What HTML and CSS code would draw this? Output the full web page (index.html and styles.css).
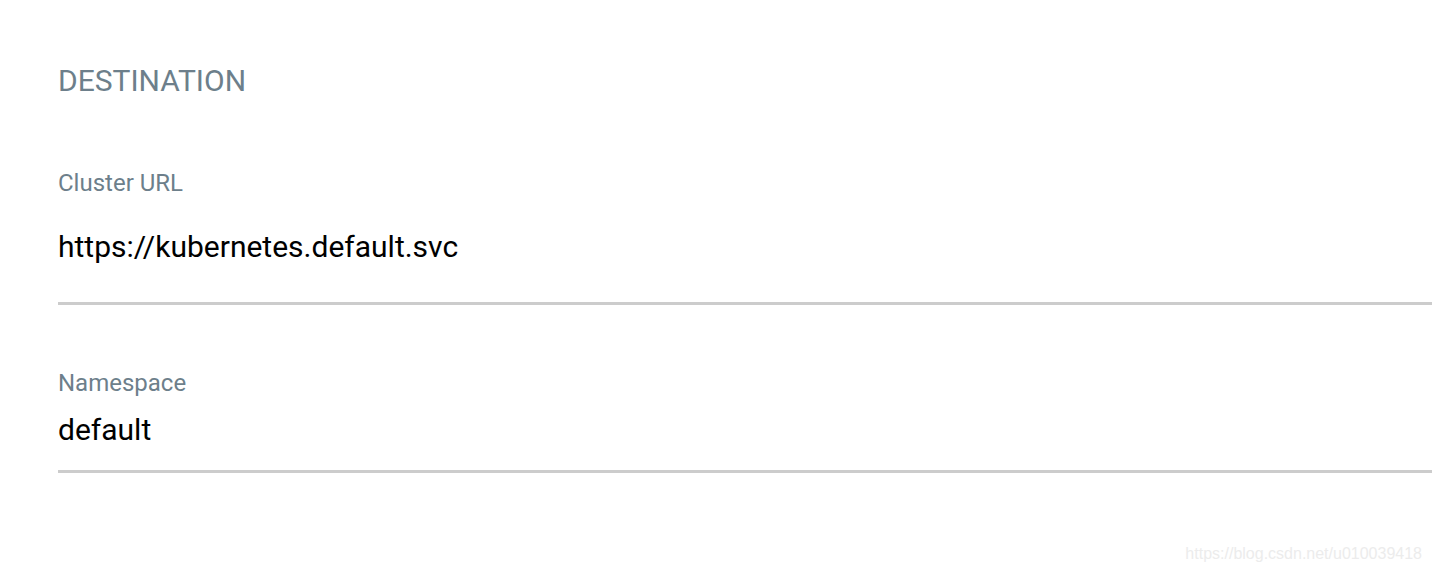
FILE: index.html
```html
<!DOCTYPE html>
<html>
<head>
<meta charset="utf-8">
<link rel="stylesheet" href="styles.css">
</head>
<body>
<div class="page">
  <h2 class="section-title">DESTINATION</h2>
  <div class="field field-url">
    <label class="field-label">Cluster URL</label>
    <div class="field-value">https://kubernetes.default.svc</div>
  </div>
  <div class="field field-ns">
    <label class="field-label">Namespace</label>
    <div class="field-value">default</div>
  </div>
  <div class="watermark">https://blog.csdn.net/u010039418</div>
</div>
</body>
</html>
```
FILE: styles.css
```css
html, body {
  margin: 0;
  padding: 0;
  background: #fff;
}
body {
  width: 1432px;
  height: 572px;
  overflow: hidden;
  font-family: Roboto, "Liberation Sans", sans-serif;
}
.page {
  position: relative;
  height: 572px;
  padding: 63px 0 0 58px;
  box-sizing: border-box;
}
.section-title {
  margin: 0;
  font-size: 30px;
  font-weight: 400;
  line-height: 36px;
  color: #6d7f8b;
}
.field {
  border-bottom: 3px solid #cccccc;
}
.field-url {
  margin-top: 70px;
  padding-bottom: 38px;
}
.field-ns {
  margin-top: 64px;
  padding-bottom: 22px;
}
.field-label {
  display: block;
  font-size: 24px;
  line-height: 28px;
  color: #6d7f8b;
}
.field-url .field-value {
  margin-top: 32px;
}
.field-ns .field-value {
  margin-top: 15px;
}
.field-value {
  font-size: 30px;
  line-height: 36px;
  color: #000;
}
.field-url .field-value {
  margin-bottom: -1px;
}
.watermark {
  position: absolute;
  right: 10px;
  bottom: 9px;
  font-family: "Liberation Sans", Arial, sans-serif;
  font-size: 16px;
  color: #ececec;
}
```
